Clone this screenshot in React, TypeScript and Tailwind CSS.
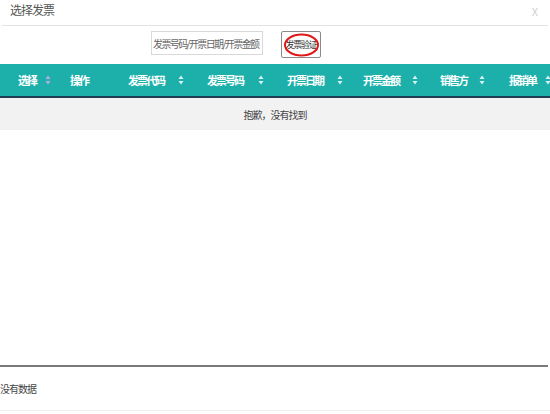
const cols = [
  { title: "选择", w: 52, sort: "faint", gap: 9 },
  { title: "操作", w: 58, sort: "none", gap: 0 },
  { title: "发票代码", w: 79, sort: "yes", gap: 14 },
  { title: "发票号码", w: 80, sort: "yes", gap: 15 },
  { title: "开票日期", w: 76, sort: "yes", gap: 14 },
  { title: "开票金额", w: 77, sort: "yes", gap: 13 },
  { title: "销售方", w: 69, sort: "yes", gap: 12 },
  { title: "报销单", w: 50, sort: "yes", gap: 9 },
]

function SortIcon({ faint }: { faint?: boolean }) {
  const c = faint ? "#b9a8e6" : "#d8f2f0"
  return (
    <svg width="6" height="10" viewBox="0 0 6 10" className="shrink-0">
      <path d="M3 0.5 L5.5 4 L0.5 4 Z" fill={c} />
      <path d="M3 9.5 L5.5 6 L0.5 6 Z" fill={c} />
    </svg>
  )
}

export default function App() {
  return (
    <div
      className="w-[550px] h-[414px] bg-white relative overflow-hidden flex flex-col"
      style={{ fontFamily: '"Noto Sans CJK SC", "Noto Sans", sans-serif' }}
    >
      {/* Title bar */}
      <div className="h-[26px] flex items-start justify-between pl-[8px] pr-[10px] pt-[3px] border-b border-[#e3e3e3] mx-[2px]">
        <span className="text-[12px] leading-[14px] text-[#555] tracking-[-1px]">选择发票</span>
        <span className="text-[11px] leading-[12px] text-[#d0d0d0] mt-[2px]">X</span>
      </div>

      {/* Search */}
      <div className="h-[38px] flex items-start pl-[151px] pt-[5px] gap-[18px]">
        <div className="w-[112px] h-[24px] border border-[#d9d9d9] flex items-center pl-[1px] overflow-hidden">
          <span className="text-[10px] text-[#666] whitespace-nowrap tracking-[-1.6px]">发票号码/开票日期/开票金额</span>
        </div>
        <div className="relative w-[40px] h-[27px] border border-[#8a8a8a] rounded-[2px] flex items-center justify-center">
          <span className="text-[9px] text-[#333] tracking-[-1.2px] whitespace-nowrap">发票验证</span>
          <svg className="absolute left-[1px] top-[1px]" width="37" height="24" viewBox="0 0 37 24">
            <ellipse cx="18.5" cy="12" rx="16.5" ry="10.5" fill="none" stroke="#e01818" strokeWidth="2" />
          </svg>
        </div>
      </div>

      {/* Table header */}
      <div className="h-[34px] bg-[#1db0ab] border-b-[2px] border-[#1e3d55] flex items-center pl-[18px]">
        {cols.map((c) => (
          <div key={c.title} className="flex items-center shrink-0" style={{ width: c.w }}>
            <span className="text-[11px] font-bold text-white tracking-[-2px] whitespace-nowrap">{c.title}</span>
            {c.sort !== "none" && (
              <span className="flex" style={{ marginLeft: c.gap }}>
                <SortIcon faint={c.sort === "faint"} />
              </span>
            )}
          </div>
        ))}
      </div>

      {/* Empty row */}
      <div className="h-[32px] bg-[#f2f2f2] flex items-center justify-center">
        <span className="text-[10px] text-[#444] tracking-[-1px]">抱歉，没有找到</span>
      </div>

      <div className="flex-1" />

      {/* Footer */}
      <div className="h-[2px] bg-[#7a7a7a] mr-[2px]" />
      <div className="h-[43px] flex items-center">
        <span className="text-[10px] text-[#444] tracking-[-1px]">没有数据</span>
      </div>
      <div className="h-[1px] bg-[#eeeeee]" />
      <div className="h-[3px]" />
    </div>
  )
}
